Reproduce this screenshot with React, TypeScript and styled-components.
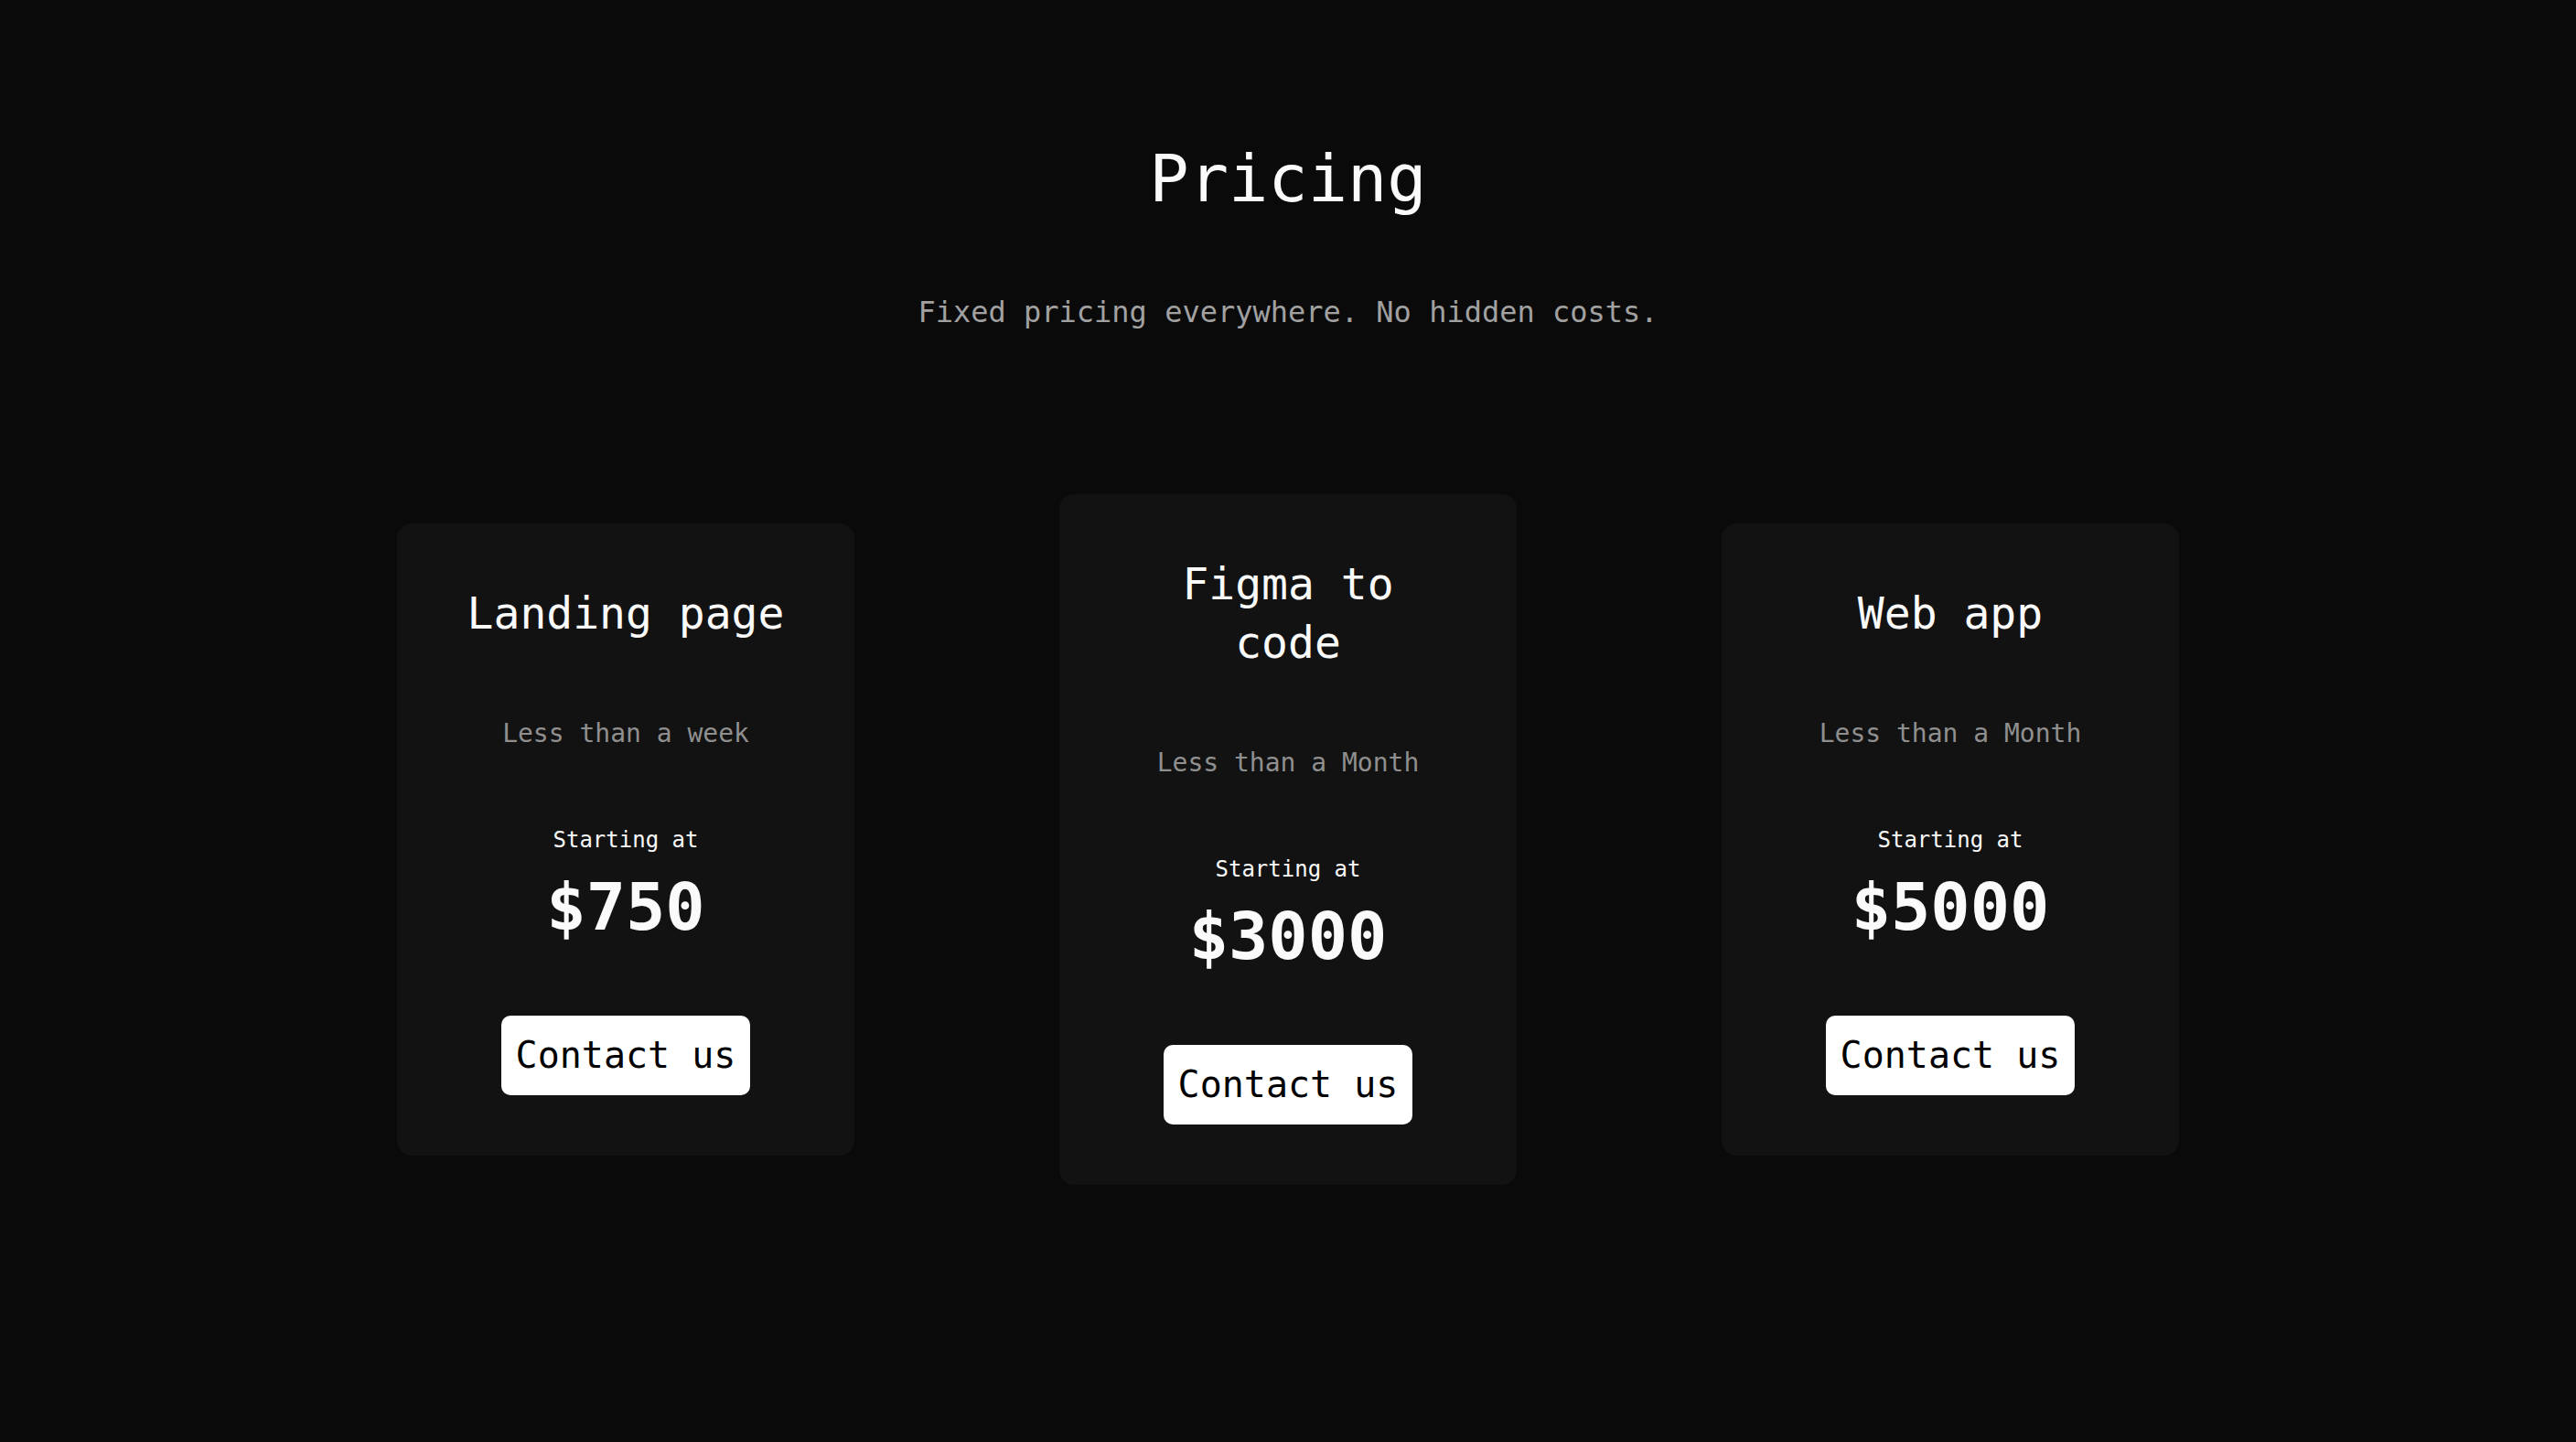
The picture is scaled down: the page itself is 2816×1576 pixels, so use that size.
import React from "react";
import styled, { createGlobalStyle } from "styled-components";

const GlobalStyle = createGlobalStyle`
  html, body {
    margin: 0;
    padding: 0;
    background: #0a0a0a;
  }
  body {
    min-height: 100vh;
    font-family: "DejaVu Sans Mono", "Liberation Mono", monospace;
    color: #fafafa;
  }
  * { box-sizing: border-box; }
`;

const Page = styled.main`
  min-height: 100vh;
  background: #0a0a0a;
  display: flex;
  flex-direction: column;
  align-items: center;
  padding-top: 155px;
`;

const Header = styled.header`
  display: flex;
  flex-direction: column;
  align-items: center;
  gap: 82px;
`;

const Title = styled.h1`
  margin: 0;
  font-size: 72px;
  line-height: 80px;
  font-weight: 400;
  color: #fafafa;
`;

const Subtitle = styled.p`
  margin: 0;
  font-size: 32px;
  line-height: 48px;
  color: #a1a1a1;
`;

const CardRow = styled.section`
  margin-top: 175px;
  display: flex;
  align-items: center;
  justify-content: center;
  gap: 224px;
`;

const Card = styled.article`
  width: 500px;
  padding: 66px 64px 66px;
  background: #121212;
  border-radius: 16px;
  display: flex;
  flex-direction: column;
  align-items: center;
  text-align: center;
  gap: 79px;
`;

const CardTitle = styled.h2`
  margin: 0;
  font-size: 48px;
  line-height: 64px;
  font-weight: 400;
  color: #fafafa;
`;

const Duration = styled.p`
  margin: 0;
  font-size: 28px;
  line-height: 42px;
  color: #8f8f8f;
`;

const PriceBlock = styled.div`
  display: flex;
  flex-direction: column;
  align-items: center;
  gap: 17px;
`;

const StartingAt = styled.span`
  font-size: 24px;
  line-height: 32px;
  color: #fafafa;
`;

const Price = styled.span`
  font-size: 72px;
  line-height: 80px;
  font-weight: 700;
  color: #fafafa;
`;

const ContactButton = styled.button`
  font-family: "DejaVu Sans Mono", "Liberation Mono", monospace;
  font-size: 40px;
  line-height: 55px;
  padding: 16px 16px;
  background: #ffffff;
  color: #000000;
  border: none;
  border-radius: 10px;
  cursor: pointer;
`;

type Plan = {
  title: string;
  duration: string;
  price: string;
};

const plans: Plan[] = [
  { title: "Landing page", duration: "Less than a week", price: "$750" },
  { title: "Figma to code", duration: "Less than a Month", price: "$3000" },
  { title: "Web app", duration: "Less than a Month", price: "$5000" },
];

export default function App() {
  return (
    <>
      <GlobalStyle />
      <Page>
        <Header>
          <Title>Pricing</Title>
          <Subtitle>Fixed pricing everywhere. No hidden costs.</Subtitle>
        </Header>
        <CardRow>
          {plans.map((p) => (
            <Card key={p.title}>
              <CardTitle>{p.title}</CardTitle>
              <Duration>{p.duration}</Duration>
              <PriceBlock>
                <StartingAt>Starting at</StartingAt>
                <Price>{p.price}</Price>
              </PriceBlock>
              <ContactButton>Contact us</ContactButton>
            </Card>
          ))}
        </CardRow>
      </Page>
    </>
  );
}
